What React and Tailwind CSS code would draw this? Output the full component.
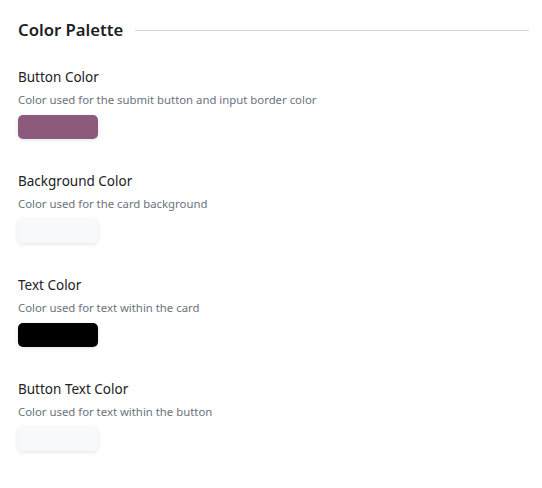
const palette = [
  { label: "Button Color", hint: "Color used for the submit button and input border color", color: "bg-[#8b5a7c]" },
  { label: "Background Color", hint: "Color used for the card background", color: "bg-[#f8f9fb]" },
  { label: "Text Color", hint: "Color used for text within the card", color: "bg-black" },
  { label: "Button Text Color", hint: "Color used for text within the button", color: "bg-[#f8f9fb]" },
]

export default function App() {
  return (
    <div className="min-h-screen bg-white pl-[18px] pr-[13px] pt-[16px] font-['Noto_Sans',sans-serif]">
      {/* Header */}
      <div className="flex items-center gap-3">
        <h2 className="text-[16.7px] leading-[28px] font-semibold text-[#1b1f24]">Color Palette</h2>
        <div className="flex-1 h-px bg-[#d6d6d6]" />
      </div>

      <div className="mt-[23px] flex flex-col gap-8">
        {palette.map((item) => (
          <div key={item.label}>
            <div className="text-[13.5px] leading-5 text-[#222]">{item.label}</div>
            <div className="mt-[5px] text-[11.35px] leading-4 text-[#6b7280]">{item.hint}</div>
            <div className={`mt-[7px] w-20 h-6 rounded-[5px] shadow-[0_1px_4px_rgba(0,0,0,0.12)] ${item.color}`} />
          </div>
        ))}
      </div>
    </div>
  )
}
